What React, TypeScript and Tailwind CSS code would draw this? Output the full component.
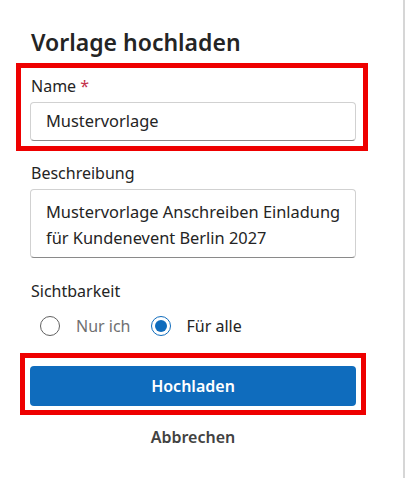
const font = { fontFamily: '"Segoe UI", "Noto Sans", "Open Sans", sans-serif' };

function Radio({ checked, label }: { checked: boolean; label: string }) {
  return (
    <label className="flex items-center gap-[16px]">
      <span
        className={
          checked
            ? "flex h-[20px] w-[20px] items-center justify-center rounded-full border border-[#0f6cbd]"
            : "flex h-[20px] w-[20px] items-center justify-center rounded-full border border-[#616161]"
        }
      >
        {checked && <span className="h-[12px] w-[12px] rounded-full bg-[#0f6cbd]" />}
      </span>
      <span className={checked ? "text-[16px] text-[#242424]" : "text-[16px] text-[#707070]"}>{label}</span>
    </label>
  );
}

export default function App() {
  return (
    <div className="relative h-[478px] w-[406px] bg-white" style={font}>
      <div className="absolute right-[1px] top-0 h-full w-[2px] bg-[#d6d6d6]" />
      <div className="flex w-[356px] flex-col pl-[30px] pt-[28px] text-[#242424]">
        <h1 className="pl-[1px] text-[23px] font-semibold leading-[28px]">Vorlage hochladen</h1>

        <div className="relative mt-[19px]">
          <div className="pointer-events-none absolute -bottom-[10px] -left-[14px] -right-[12px] -top-[12px] border-[5px] border-[#ee0000]" />
          <div className="pl-[1px] text-[16px] leading-[22px]">
            Name <span className="text-[#c4314b]">*</span>
          </div>
          <div className="mt-[5px] flex h-[39px] items-center rounded-[4px] border border-[#d1d1d1] border-b-[#8a8a8a] px-[15px] text-[16.4px]">
            Mustervorlage
          </div>
        </div>

        <div className="mt-[21px] pl-[1px] text-[16px] leading-[22px]">Beschreibung</div>
        <div className="mt-[5px] h-[69px] rounded-[4px] border border-[#d1d1d1] border-b-[#8a8a8a] pl-[15px] pr-[4px] pt-[9px] text-[16.4px] leading-[26px]">
          Mustervorlage Anschreiben Einladung für Kundenevent Berlin 2027
        </div>

        <div className="mt-[22px] pl-[1px] text-[16px] leading-[22px]">Sichtbarkeit</div>
        <div className="mt-[12px] flex h-[24px] items-center gap-[20px] pl-[10px]">
          <Radio checked={false} label="Nur ich" />
          <Radio checked label="Für alle" />
        </div>

        <div className="relative mt-[28px]">
          <div className="pointer-events-none absolute -bottom-[9px] -left-[10px] -right-[10px] -top-[13px] border-[5px] border-[#ee0000]" />
          <button className="flex h-[40px] w-full items-center justify-center rounded-[4px] bg-[#0f6cbd] text-[16px] font-semibold text-white">
            Hochladen
          </button>
        </div>

        <div className="mt-[20px] text-center text-[16px] font-semibold leading-[22px] text-[#424242]">Abbrechen</div>
      </div>
    </div>
  );
}
